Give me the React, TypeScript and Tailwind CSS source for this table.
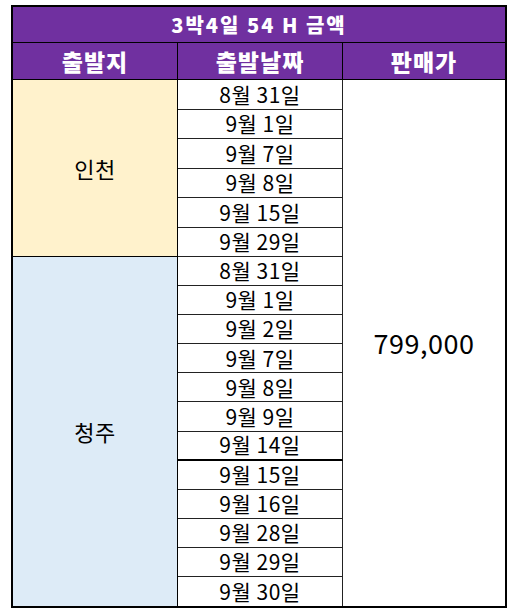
import React from "react";

const incheonDates = ["8월 31일", "9월 1일", "9월 7일", "9월 8일", "9월 15일", "9월 29일"];
const cheongjuDates = [
  "8월 31일",
  "9월 1일",
  "9월 2일",
  "9월 7일",
  "9월 8일",
  "9월 9일",
  "9월 14일",
  "9월 15일",
  "9월 16일",
  "9월 28일",
  "9월 29일",
  "9월 30일",
];

const font = { fontFamily: '"Noto Sans CJK KR", "Noto Sans", sans-serif' };

export default function App() {
  return (
    <div className="w-[519px] h-[616px] bg-white pt-[5px] pl-[11px]" style={font}>
      <div className="w-[496px] border-2 border-black">
        <div className="h-[36px] bg-[#7030a0] border-b border-black flex items-center justify-center text-white font-black text-[20px] tracking-[2px]">
          3박4일 54 H 금액
        </div>
        <div className="grid grid-cols-[165px_165px_1fr] h-[37px] bg-[#7030a0] border-b border-black text-white font-black text-[23px] tracking-[1px]">
          <div className="flex items-center justify-center border-r border-black">출발지</div>
          <div className="flex items-center justify-center border-r border-black">출발날짜</div>
          <div className="flex items-center justify-center">판매가</div>
        </div>
        <div className="grid grid-cols-[165px_165px_1fr] text-black text-[21px] tracking-[0.5px]">
          <div
            className="bg-[#fff2cc] border-r border-b border-black flex items-center justify-center text-[22px]"
            style={{ gridRow: "1 / span 6", gridColumn: 1 }}
          >
            인천
          </div>
          {incheonDates.map((d, i) => (
            <div
              key={`i${i}`}
              className="h-[29.5px] border-r border-b border-[#222] flex items-center justify-center"
              style={{ gridColumn: 2 }}
            >
              {d}
            </div>
          ))}
          <div
            className="flex items-center justify-center text-[27px] tracking-[0.5px]"
            style={{ gridRow: "1 / span 18", gridColumn: 3 }}
          >
            799,000
          </div>
          <div
            className="bg-[#ddebf7] border-r border-black flex items-center justify-center text-[22px]"
            style={{ gridRow: "7 / span 12", gridColumn: 1 }}
          >
            청주
          </div>
          {cheongjuDates.map((d, i) => (
            <div
              key={`c${i}`}
              className={`h-[29.1px] border-r border-[#222] flex items-center justify-center ${
                i === 11 ? "" : i === 6 ? "border-b-2 border-b-black" : "border-b"
              }`}
              style={{ gridColumn: 2 }}
            >
              {d}
            </div>
          ))}
        </div>
      </div>
    </div>
  );
}
